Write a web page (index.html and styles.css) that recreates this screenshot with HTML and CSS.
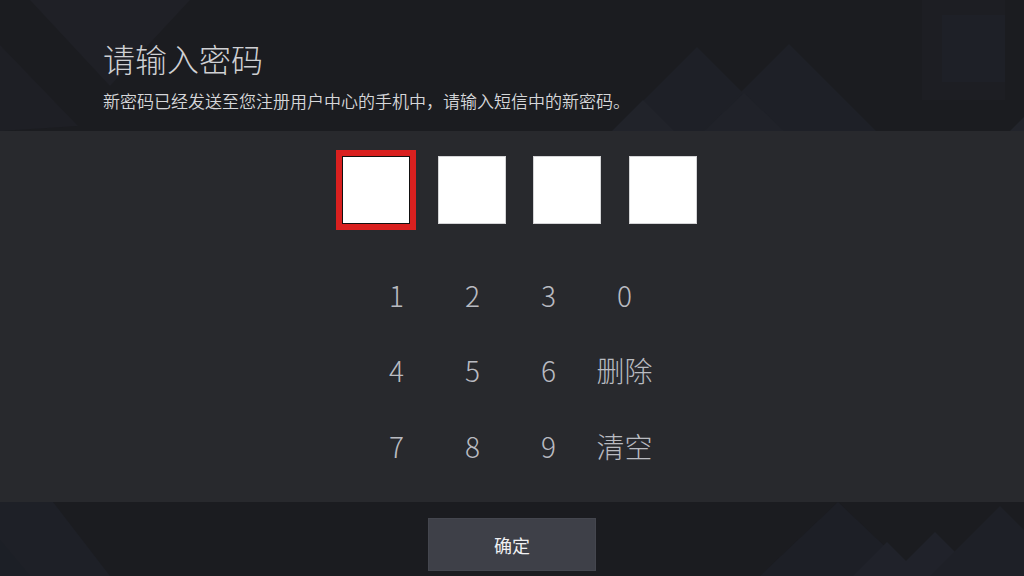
FILE: index.html
```html
<!DOCTYPE html>
<html lang="zh-CN">
<head>
<meta charset="utf-8">
<title>请输入密码</title>
<link rel="stylesheet" href="styles.css">
</head>
<body>
<div class="screen">
  <svg class="bg" width="1024" height="576" viewBox="0 0 1024 576" aria-hidden="true">
    <polygon points="30,0 190,0 110,86" fill="#1f2026"/>
    <polygon points="0,45 78,126 0,131" fill="#1e1f25"/>
    <polygon points="613,131 697,47 781,131" fill="#1e2027"/>
    <polygon points="702,131 789,44 876,131" fill="#1e2027"/>
    <polygon points="612,131 643,100 674,131" fill="#21232a"/>
    <polygon points="704,131 744,93 784,131" fill="#202229"/>
    <rect x="922" y="0" width="83" height="100" fill="#1d1e23"/>
    <rect x="942" y="15" width="63" height="67" fill="#1e2027"/>
    <polygon points="1010,131 1024,117 1024,131" fill="#22242b"/>
    <polygon points="0,502 53,502 110,576 0,576" fill="#1e2027"/>
    <polygon points="0,540 30,576 0,576" fill="#1c1f26"/>
    <polygon points="760,576 838,502 916,576" fill="#1d1f26"/>
    <polygon points="853,576 887,542 921,576" fill="#20222a"/>
    <polygon points="891,576 935,532 979,576" fill="#20222a"/>
    <polygon points="930,576 1000,506 1024,530 1024,576" fill="#1e2027"/>
  </svg>

  <header class="head">
    <h1 class="title">请输入密码</h1>
    <p class="sub">新密码已经发送至您注册用户中心的手机中，请输入短信中的新密码。</p>
  </header>

  <main class="panel">
    <div class="boxes">
      <div class="box focus"></div>
      <div class="box"></div>
      <div class="box"></div>
      <div class="box"></div>
    </div>
    <div class="keypad">
      <span class="key">1</span><span class="key">2</span><span class="key">3</span><span class="key">0</span>
      <span class="key">4</span><span class="key">5</span><span class="key">6</span><span class="key">删除</span>
      <span class="key">7</span><span class="key">8</span><span class="key">9</span><span class="key">清空</span>
    </div>
  </main>

  <footer class="foot">
    <button class="ok">确定</button>
  </footer>
</div>
</body>
</html>
```

FILE: styles.css
```css
html, body {
  margin: 0;
  padding: 0;
  background: #1b1c20;
}
body {
  font-family: "Noto Sans CJK SC", "Noto Sans", sans-serif;
}
.screen {
  position: relative;
  width: 1024px;
  height: 576px;
  overflow: hidden;
  background: #1b1c20;
}
.bg {
  position: absolute;
  left: 0;
  top: 0;
}
.head {
  position: relative;
  height: 131px;
  box-sizing: border-box;
  padding: 42px 0 0 103px;
}
.title {
  margin: 0;
  font-family: "Noto Sans CJK SC Light", "Noto Sans CJK SC DemiLight", "Noto Sans CJK SC", sans-serif;
  font-size: 32px;
  line-height: 32px;
  font-weight: 200;
  color: #cfd0d3;
}
.sub {
  margin: 18px 0 0;
  font-family: "Noto Sans CJK SC DemiLight", "Noto Sans CJK SC", sans-serif;
  font-size: 17px;
  line-height: 17px;
  font-weight: 300;
  color: #d6d7da;
}
.panel {
  position: relative;
  height: 371px;
  box-sizing: border-box;
  background: #28292d;
  padding-top: 25px;
}
.boxes {
  display: flex;
  justify-content: center;
  gap: 27.5px;
  padding-left: 15px;
}
.box {
  width: 68px;
  height: 68px;
  box-sizing: border-box;
  background: #ffffff;
  border: 1px solid #d4d4d6;
}
.box.focus {
  border-color: #111;
  outline: 6px solid #d9201f;
}
.keypad {
  margin: 33px auto 0;
  display: grid;
  grid-template-columns: repeat(4, 76px);
  grid-auto-rows: 75.5px;
  width: 304px;
  position: relative;
  left: -1.5px;
}
.key {
  display: flex;
  align-items: center;
  justify-content: center;
  font-family: "Noto Sans CJK SC Light", "Noto Sans CJK SC DemiLight", "Noto Sans CJK SC", sans-serif;
  font-size: 28px;
  font-weight: 300;
  color: #b9bbc1;
}
.foot {
  position: relative;
  display: flex;
  justify-content: center;
  padding-top: 16px;
}
.ok {
  width: 168px;
  height: 53px;
  background: #3e4048;
  border: 1px solid #44464e;
  color: #f0f0f2;
  font-family: "Noto Sans CJK SC", "Noto Sans", sans-serif;
  font-size: 18px;
  padding: 0;
}
```
